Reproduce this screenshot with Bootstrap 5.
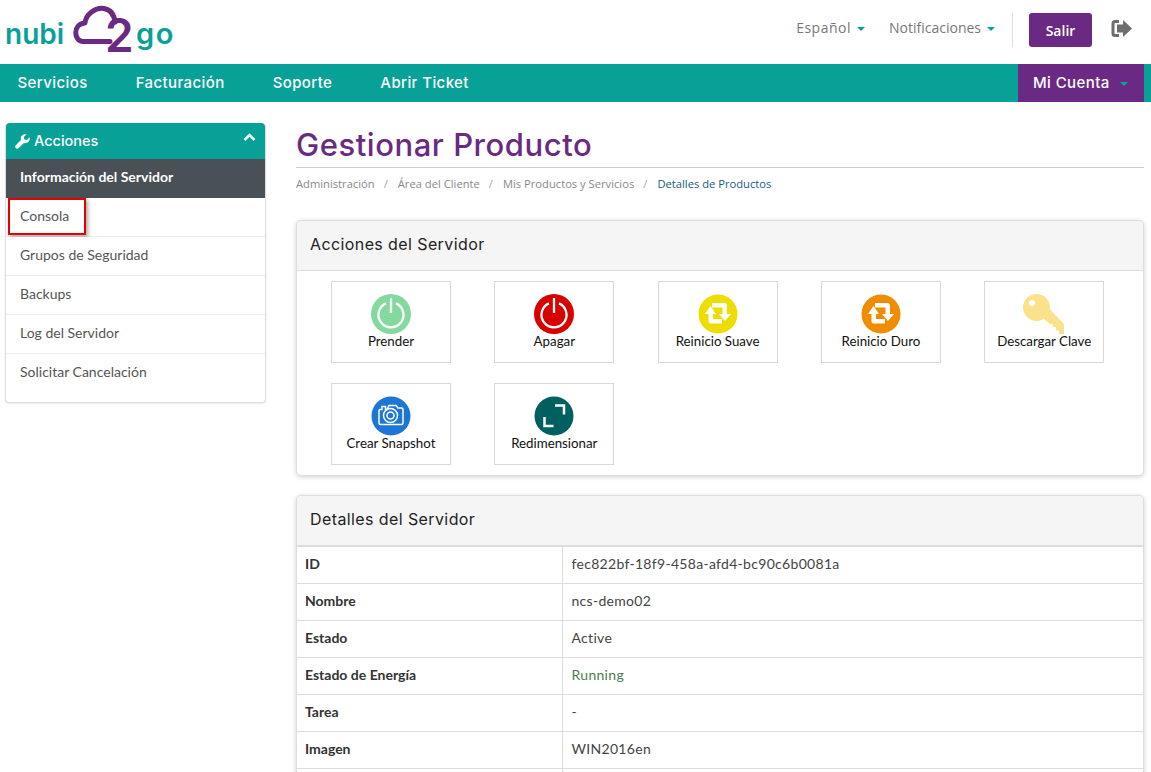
<!DOCTYPE html>
<html lang="es">
<head>
  <meta charset="UTF-8">
  <meta name="viewport" content="width=device-width, initial-scale=1.0">
  <title>Gestionar Producto</title>
  <link href="https://cdn.jsdelivr.net/npm/bootstrap@5.3.0/dist/css/bootstrap.min.css" rel="stylesheet">
  <style>
    body { font-family: Lato, sans-serif; font-size: 14px; color: #444; overflow: hidden; }
    .head-font { font-family: Inter, sans-serif; }

    /* top bar */
    .top-bar { height: 64px; padding: 0 19px 4px 5px; }
    .top-bar .logo-svg { align-self: flex-start; }
    .top-link { font-family: "Open Sans", sans-serif; font-size: 14px; color: #777; text-decoration: none; margin-bottom: 6px; }
    .lang-link { letter-spacing: .5px; }
    .top-link::after, .acct-link::after { color: #08a198; margin-left: 6px; vertical-align: 2px; border-top-width: 4px; border-left-width: 4px; border-right-width: 4px; }
    .top-divider { width: 1px; height: 34px; background: #ddd; margin: 0 16px 0 17px; }
    .btn-salir { background: #6a2a83; color: #fff; font-family: "Open Sans", sans-serif; font-size: 14px; font-weight: 600; width: 63px; height: 34px; padding: 0; border-radius: 3px; line-height: 34px; }
    .btn-salir:hover { background: #6a2a83; color: #fff; }
    .exit-icon { margin-left: 19px; margin-bottom: 3px; }

    /* main nav */
    .main-nav { --bs-navbar-nav-link-padding-x: 24px; background: #08a198; height: 38px; padding: 0 7px 0 0; }
    .main-nav .nav-link { color: #fff; font-size: 15px; font-weight: 500; letter-spacing: .4px; padding: 0 24px; line-height: 38px; }
    .main-nav .navbar-nav { margin-left: -6.500px; }
    .acct-link { background: #6a2a83; color: #fff; font-size: 15px; font-weight: 500; letter-spacing: .4px; width: 126px; height: 38px; line-height: 38px; padding-left: 15px; text-decoration: none; display: block; }
    .acct-link::after { margin-left: 10px; }

    /* layout */
    .page-body { padding: 21px 7px 0 5px; gap: 30px; }
    .side-col { width: 261px; flex: none; }
    .main-col { flex: 1; min-width: 0; }

    /* sidebar */
    .side-card { border-color: #ddd; border-radius: 4px; box-shadow: 0 1px 2px rgba(0,0,0,.08); padding-bottom: 9px; border-top: 0; }
    .side-head { background: #08a198; color: #fff; height: 36px; font-size: 14.5px; padding: 0 9px; border-radius: 4px 4px 0 0; font-weight: 500; }
    .side-list .list-group-item { height: 39px; padding: 0 14px; line-height: 36px; font-size: 14px; color: #555; border-color: #eee; border-left: 0; border-right: 0; border-radius: 0; position: relative; }
    .side-list .list-group-item:first-child { border-top: 0; }
    .side-list .list-group-item.active { background: #495056; color: #fff; font-weight: 700; border-color: #495056; margin-top: 0; }
    .red-box { position: absolute; left: 2px; top: 0; width: 78px; height: 37px; border: 2px solid #e60000; box-shadow: 2px 2px 4px rgba(0,0,0,.35); pointer-events: none; }

    /* title */
    .page-title { color: #6a2a83; font-size: 31px; font-weight: 500; letter-spacing: .55px; margin: 0; padding: 4px 0 5px; line-height: 36px; border-bottom: 1px solid #ccc; height: 45px; }
    .crumbs { font-family: "Open Sans", sans-serif; font-size: 11.2px; margin: 8px 0 29px; line-height: 15px; }
    .crumbs .breadcrumb-item, .crumbs .breadcrumb-item a { color: #888; text-decoration: none; }
    .crumbs .breadcrumb-item.active { color: #1a5a80; }
    .crumbs .breadcrumb-item + .breadcrumb-item { padding-left: 9px; }
    .crumbs .breadcrumb-item + .breadcrumb-item::before { padding-right: 10px; color: #aaa; }

    /* panels */
    .panel { border-color: #ddd; border-radius: 5px; box-shadow: 0 1px 5px rgba(0,0,0,.18); margin-bottom: 20px; }
    .panel .card-header { background: #f5f5f5; height: 50px; padding: 0 13px; font-size: 16px; letter-spacing: .4px; line-height: 47px; color: #222; border-bottom: 1px solid #ddd; }
    .tool-grid { display: flex; flex-wrap: wrap; gap: 20px 43.3px; padding: 10px 34px; }
    .tool-grid + * { margin-top: 0; }
    .panel-actions { margin-bottom: 19px; }
    .tool-btn { width: 120px; height: 82px; border: 1px solid #d8d8d8; background: #fff; color: #111; font-size: 13.3px; line-height: 18px; text-decoration: none; display: flex; flex-direction: column; align-items: center; padding-top: 12px; }
    .tool-btn svg { width: 40px; height: 40px; display: block; margin-bottom: -2px; }
    .tool-btn svg.key-icon { width: 42px; }

    /* details table */
    .detail-table { margin: 0; font-size: 14px; --bs-table-border-color: #ddd; color: #444; }
    .detail-table th { width: 265px; font-weight: 700; color: #333; }
    .detail-table th, .detail-table td { height: 37px; padding: 0 8px 4px; vertical-align: middle; border-color: #ddd; }
    .detail-table td { padding-left: 9px; border-left: 1px solid #ddd; letter-spacing: .3px; }
    .detail-table tr:first-child th, .detail-table tr:first-child td { border-top: 1px solid #ddd; }
    .state-ok { color: #4f7a52; }
  </style>
</head>
<body>

  <!-- logo row -->
  <header class="top-bar d-flex align-items-center justify-content-between">
    <svg class="logo-svg" width="175" height="64" viewBox="0 0 175 64" role="img" aria-label="nubi2go">
      <path d="M105 41.500 H78 C69 41.500 67 24 80 23 C81 14 91 7 99 8.500 C105 9.500 109 14 110 22" fill="none" stroke="#6a2a83" stroke-width="5" stroke-linecap="round" stroke-linejoin="round"/>
      <text x="0" y="44" font-family="Inter, sans-serif" font-size="28" font-weight="600" fill="#08a198">nubi</text>
      <text x="100" y="52" font-family="Inter, sans-serif" font-size="46" font-weight="600" fill="#6a2a83">2</text>
      <text x="131" y="44" font-family="Inter, sans-serif" font-size="29" font-weight="600" fill="#08a198" letter-spacing="1.500">go</text>
    </svg>
    <div class="d-flex align-items-center">
      <a href="#" class="top-link lang-link dropdown-toggle me-4">Español</a>
      <a href="#" class="top-link dropdown-toggle">Notificaciones</a>
      <span class="top-divider"></span>
      <button class="btn btn-salir">Salir</button>
      <svg class="exit-icon" width="21" height="19" viewBox="0 0 21 19" aria-label="Salir">
        <path d="M8 2.500 H4 Q2 2.500 2 4.500 V14.500 Q2 16.500 4 16.500 H8" fill="none" stroke="#6e6e6e" stroke-width="3"/>
        <path d="M6 5.500 H12 V1 L21 9.500 L12 18 V13.500 H6 Z" fill="#6e6e6e"/>
      </svg>
    </div>
  </header>

  <!-- main menu -->
  <nav class="navbar navbar-expand main-nav head-font">
    <ul class="navbar-nav">
      <li class="nav-item"><a class="nav-link" href="#">Servicios</a></li>
      <li class="nav-item"><a class="nav-link" href="#">Facturación</a></li>
      <li class="nav-item"><a class="nav-link" href="#">Soporte</a></li>
      <li class="nav-item"><a class="nav-link" href="#">Abrir Ticket</a></li>
    </ul>
    <a class="acct-link dropdown-toggle ms-auto" href="#">Mi Cuenta</a>
  </nav>

  <div class="page-body d-flex align-items-start">

    <!-- sidebar -->
    <aside class="side-col">
      <div class="card side-card">
        <div class="side-head head-font d-flex align-items-center justify-content-between">
          <span class="d-flex align-items-center gap-1">
            <svg width="15" height="15" viewBox="0 0 15 15"><path d="M14.500 3.300 L11.800 6 L9.300 5.500 L8.800 3 L11.500 .4 C9 -.4 6.200 1 5.800 3.800 C5.700 4.700 5.800 5.400 6 6 L.8 11.200 C-.1 12.100 0 13.200 .8 14 C1.600 14.800 2.800 14.900 3.700 14 L8.900 8.900 C9.600 9.100 10.300 9.200 11 9.100 C13.900 8.700 15.300 6 14.500 3.300 Z" fill="#fff"/></svg>
            Acciones
          </span>
          <svg width="13" height="9" viewBox="0 0 13 9" class="mb-2"><path d="M1.500 7 L6.500 2 L11.500 7" fill="none" stroke="#e8f7f6" stroke-width="2.500"/></svg>
        </div>
        <ul class="list-group list-group-flush side-list">
          <li class="list-group-item active">Información del Servidor</li>
          <li class="list-group-item">Consola<span class="red-box"></span></li>
          <li class="list-group-item">Grupos de Seguridad</li>
          <li class="list-group-item">Backups</li>
          <li class="list-group-item">Log del Servidor</li>
          <li class="list-group-item">Solicitar Cancelación</li>
        </ul>
      </div>
    </aside>

    <!-- content -->
    <main class="main-col">
      <h1 class="page-title head-font">Gestionar Producto</h1>
      <ol class="breadcrumb crumbs">
        <li class="breadcrumb-item"><a href="#">Administración</a></li>
        <li class="breadcrumb-item"><a href="#">Área del Cliente</a></li>
        <li class="breadcrumb-item"><a href="#">Mis Productos y Servicios</a></li>
        <li class="breadcrumb-item active">Detalles de Productos</li>
      </ol>

      <div class="card panel panel-actions">
        <div class="card-header head-font">Acciones del Servidor</div>
        <div class="tool-grid">
          <a href="#" class="tool-btn">
            <svg viewBox="0 0 40 40"><circle cx="20" cy="20" r="20" fill="#84da9e"/><path d="M15 9.400 A12.500 12.500 0 1 0 25 9.400" fill="none" stroke="#fff" stroke-width="2.300"/><path d="M20 4 V19" stroke="#fff" stroke-width="2.300"/></svg>
            Prender
          </a>
          <a href="#" class="tool-btn">
            <svg viewBox="0 0 40 40"><circle cx="20" cy="20" r="20" fill="#d90000"/><path d="M15 9.400 A12.500 12.500 0 1 0 25 9.400" fill="none" stroke="#fff" stroke-width="2.300"/><path d="M20 4 V19" stroke="#fff" stroke-width="2.300"/></svg>
            Apagar
          </a>
          <a href="#" class="tool-btn">
            <svg viewBox="0 0 40 40"><circle cx="20" cy="20" r="19.500" fill="#eedd00"/><path d="M12.500 12 L18 20 H15 V25 H24 V29.500 H13 Q10.500 29.500 10.500 27 V20 H7 Z" fill="#fff"/><path d="M14 9 H26.500 Q29 9 29 12 V20 H33 L27 27 L21 20 H24.500 V13.500 H14 Z" fill="#fff"/></svg>
            Reinicio Suave
          </a>
          <a href="#" class="tool-btn">
            <svg viewBox="0 0 40 40"><circle cx="20" cy="20" r="19.500" fill="#ef8c00"/><path d="M12.500 12 L18 20 H15 V25 H24 V29.500 H13 Q10.500 29.500 10.500 27 V20 H7 Z" fill="#fff"/><path d="M14 9 H26.500 Q29 9 29 12 V20 H33 L27 27 L21 20 H24.500 V13.500 H14 Z" fill="#fff"/></svg>
            Reinicio Duro
          </a>
          <a href="#" class="tool-btn">
            <svg class="key-icon" viewBox="0 0 42 40"><circle cx="13.500" cy="13.500" r="13.500" fill="#fae28a"/><path d="M19 7 L41 30 V40 H36 V36.500 H33 V33 H30 V30 H27 L15 20 Z" fill="#fae28a"/><circle cx="9" cy="9" r="3" fill="#fff"/></svg>
            Descargar Clave
          </a>
          <a href="#" class="tool-btn">
            <svg viewBox="0 0 40 40"><circle cx="20" cy="20" r="19.500" fill="#1b76d6"/><path d="M9 13.500 H11 V10.500 H14.500 V13.500 H16 L18 9.500 H25 L27 12 H30.500 Q32 12 32 13.500 V27 Q32 28.500 30.500 28.500 H9.500 Q8 28.500 8 27 V15 Q8 13.500 9 13.500 Z" fill="none" stroke="#fff" stroke-width="1.500"/><circle cx="19.500" cy="19.500" r="7" fill="none" stroke="#fff" stroke-width="1.500"/><circle cx="19.500" cy="19.500" r="3.500" fill="none" stroke="#fff" stroke-width="1.500"/></svg>
            Crear Snapshot
          </a>
          <a href="#" class="tool-btn">
            <svg viewBox="0 0 40 40"><circle cx="20" cy="20" r="19.500" fill="#006060"/><path d="M21 9.500 H30 V18.500 M10.500 21 V30 H19.500" fill="none" stroke="#fff" stroke-width="2.500"/></svg>
            Redimensionar
          </a>
        </div>
      </div>

      <div class="card panel">
        <div class="card-header head-font">Detalles del Servidor</div>
        <table class="table detail-table">
          <tbody>
            <tr><th>ID</th><td>fec822bf-18f9-458a-afd4-bc90c6b0081a</td></tr>
            <tr><th>Nombre</th><td>ncs-demo02</td></tr>
            <tr><th>Estado</th><td>Active</td></tr>
            <tr><th>Estado de Energía</th><td class="state-ok">Running</td></tr>
            <tr><th>Tarea</th><td>-</td></tr>
            <tr><th>Imagen</th><td>WIN2016en</td></tr>
            <tr><th>&nbsp;</th><td>&nbsp;</td></tr>
          </tbody>
        </table>
      </div>
    </main>
  </div>

  <script src="https://cdn.jsdelivr.net/npm/bootstrap@5.3.0/dist/js/bootstrap.bundle.min.js"></script>
</body>
</html>
